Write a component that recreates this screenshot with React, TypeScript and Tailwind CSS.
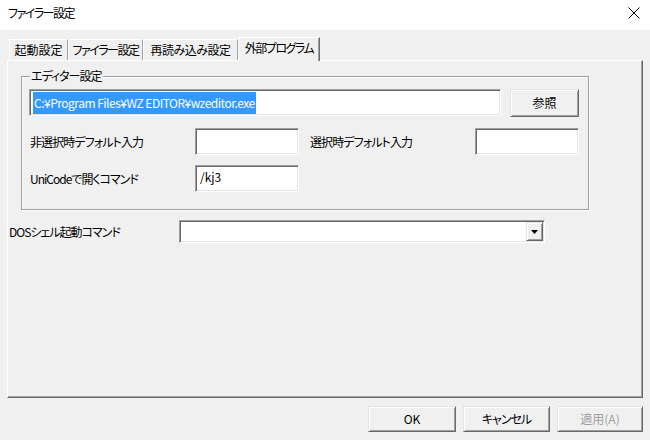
import React from "react";

const font = "font-['Noto_Sans_CJK_JP','Noto_Sans',sans-serif] [font-feature-settings:'palt']";

const sunken =
  "bg-white border border-t-[#a0a0a0] border-l-[#a0a0a0] border-b-[#ffffff] border-r-[#ffffff] shadow-[inset_1px_1px_0_#696969,inset_-1px_-1px_0_#e3e3e3]";

const raised =
  "bg-[#f0f0f0] border border-t-[#e3e3e3] border-l-[#e3e3e3] border-b-[#696969] border-r-[#696969] shadow-[inset_1px_1px_0_#ffffff,inset_-1px_-1px_0_#a0a0a0]";

function Tab({ label, w, t, active }: { label: string; w: string; t: string; active?: boolean }) {
  if (active) {
    return (
      <div
        className={`${w} ${t} h-[24px] -mb-px relative z-10 bg-[#f0f0f0] border-t border-l border-t-white border-l-white border-r border-r-[#696969] shadow-[inset_-1px_0_0_#a0a0a0] flex items-center justify-center pb-[3px] text-[12px] whitespace-nowrap text-black`}
      >
        {label}
      </div>
    );
  }
  return (
    <div
      className={`${w} ${t} h-[21px] bg-[#f0f0f0] border-t border-l border-t-white border-l-white border-r border-r-[#a0a0a0] flex items-center justify-center text-[12px] whitespace-nowrap text-black`}
    >
      {label}
    </div>
  );
}

export default function App() {
  return (
    <div className={`w-[650px] h-[440px] bg-[#f0f0f0] flex flex-col ${font} text-black`}>
      {/* Title bar */}
      <div className="h-[30px] bg-white flex items-center justify-between pl-[8px] pr-[10px]">
        <span className="text-[12px] leading-none -mt-[4px] tracking-[-1.5px]">ファイラー設定</span>
        <svg width="12" height="12" viewBox="0 0 12 12" className="-mt-[4px]">
          <path d="M0.5 0.5 L11.5 11.5 M11.5 0.5 L0.5 11.5" stroke="#000" strokeWidth="1" />
        </svg>
      </div>

      {/* Tabs */}
      <div className="pl-[9px] mt-[7px] flex items-end h-[23px]">
        <Tab label="起動設定" w="w-[59px]" t="tracking-[0px]" />
        <Tab label="ファイラー設定" w="w-[75px]" t="tracking-[-1.5px]" />
        <Tab label="再読み込み設定" w="w-[95px]" t="tracking-[-0.5px]" />
        <Tab label="外部プログラム" w="w-[82px]" t="tracking-[-1.5px]" active />
      </div>

      {/* Panel */}
      <div className="ml-[7px] w-[636px] h-[338px] border border-t-white border-l-white border-r-[#696969] border-b-[#696969] shadow-[inset_-1px_-1px_0_#a0a0a0] flex flex-col">
        {/* Group box */}
        <div className="ml-[13px] mt-[15px] w-[568px] h-[134px] relative border border-[#a0a0a0] shadow-[inset_1px_1px_0_#ffffff,1px_1px_0_#ffffff] flex flex-col pl-[7px] pt-[12px]">
          <span className="absolute left-[8px] -top-[9px] bg-[#f0f0f0] px-[1px] text-[12px] leading-[16px] tracking-[-1px]">
            エディター設定
          </span>
          <div className="flex items-start">
            <div className={`${sunken} w-[472px] h-[27px] flex items-center px-[3px]`}>
              <span className="bg-[#3399ff] text-white text-[12px] leading-[22px] px-[1px] tracking-[-0.5px] whitespace-nowrap">
                C:¥Program Files¥WZ EDITOR¥wzeditor.exe
              </span>
            </div>
            <button className={`${raised} ml-[9px] w-[69px] h-[28px] text-[12px] flex items-center justify-center`}>
              参照
            </button>
          </div>
          <div className="flex items-center mt-[11px] h-[27px]">
            <span className="w-[166px] pl-[1px] text-[12px] tracking-[-0.9px] whitespace-nowrap">非選択時デフォルト入力</span>
            <div className={`${sunken} w-[104px] h-[27px]`} />
            <span className="w-[176px] pl-[11px] text-[12px] tracking-[-0.9px] whitespace-nowrap">選択時デフォルト入力</span>
            <div className={`${sunken} w-[104px] h-[27px]`} />
          </div>
          <div className="flex items-center mt-[10px] h-[27px]">
            <span className="w-[166px] pl-[1px] text-[12px] tracking-[-1px] whitespace-nowrap">UniCodeで開くコマンド</span>
            <div className={`${sunken} w-[104px] h-[27px] flex items-start px-[4px] pt-[3px]`}>
              <span className="text-[12px] leading-[16px]">/kj3</span>
            </div>
          </div>
        </div>

        {/* DOS row */}
        <div className="flex items-center mt-[10px] ml-[1px]">
          <span className="w-[170px] text-[12px] tracking-[-1px] whitespace-nowrap">DOSシェル起動コマンド</span>
          <div className={`${sunken} w-[366px] h-[23px] flex items-center justify-end pr-[1px]`}>
            <div className={`${raised} w-[17px] h-[19px] flex items-center justify-center`}>
              <svg width="7" height="4" viewBox="0 0 7 4">
                <path d="M0 0 H7 L3.5 4 Z" fill="#000" />
              </svg>
            </div>
          </div>
        </div>
      </div>

      {/* Buttons */}
      <div className="flex justify-end gap-[7px] mt-[8px] pr-[7px]">
        <button className={`${raised} w-[88px] h-[26px] text-[12px]`}>OK</button>
        <button className={`${raised} w-[87px] h-[26px] text-[12px] tracking-[-1px]`}>キャンセル</button>
        <button className={`${raised} w-[86px] h-[26px] text-[12px] text-[#a0a0a0]`}>適用(A)</button>
      </div>
    </div>
  );
}
